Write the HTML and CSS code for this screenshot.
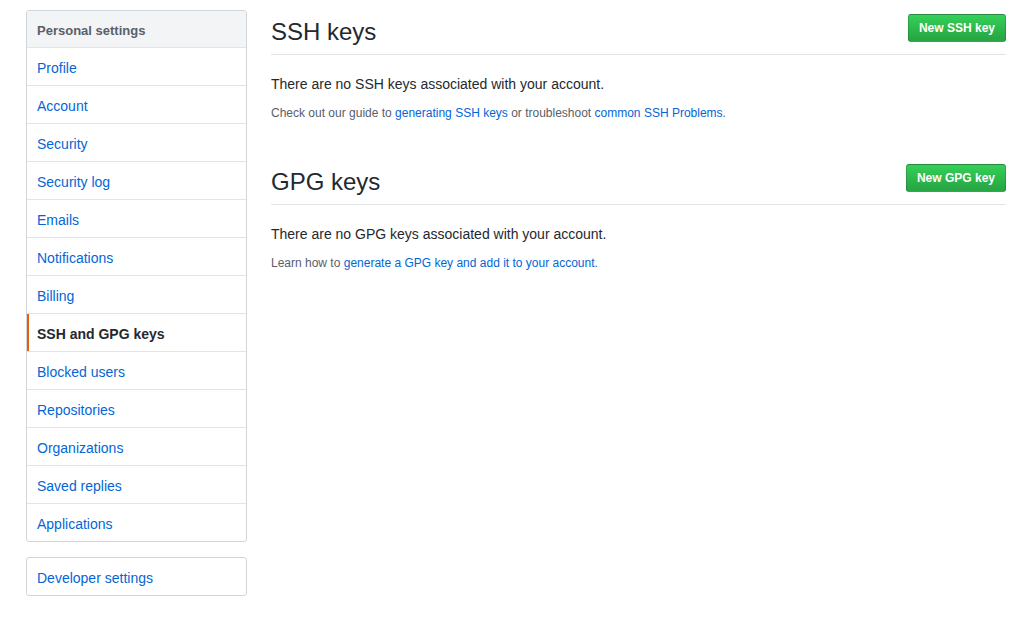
FILE: index.html
```html
<!DOCTYPE html>
<html lang="en">
<head>
<meta charset="utf-8">
<title>SSH and GPG keys</title>
<link rel="stylesheet" href="styles.css">
</head>
<body>
<div class="layout">
  <aside class="sidebar">
    <nav class="menu">
      <div class="menu-heading">Personal settings</div>
      <a class="menu-item" href="#">Profile</a>
      <a class="menu-item" href="#">Account</a>
      <a class="menu-item" href="#">Security</a>
      <a class="menu-item" href="#">Security log</a>
      <a class="menu-item" href="#">Emails</a>
      <a class="menu-item" href="#">Notifications</a>
      <a class="menu-item" href="#">Billing</a>
      <a class="menu-item selected" href="#">SSH and GPG keys</a>
      <a class="menu-item" href="#">Blocked users</a>
      <a class="menu-item" href="#">Repositories</a>
      <a class="menu-item" href="#">Organizations</a>
      <a class="menu-item" href="#">Saved replies</a>
      <a class="menu-item" href="#">Applications</a>
    </nav>
    <nav class="menu">
      <a class="menu-item" href="#">Developer settings</a>
    </nav>
  </aside>
  <main class="main">
    <section class="section">
      <div class="subhead">
        <h2 class="subhead-heading">SSH keys</h2>
        <a class="btn" href="#">New SSH key</a>
      </div>
      <p class="blank">There are no SSH keys associated with your account.</p>
      <p class="note">Check out our guide to <a href="#">generating SSH keys</a> or troubleshoot <a href="#">common SSH Problems</a>.</p>
    </section>
    <section class="section spacious">
      <div class="subhead">
        <h2 class="subhead-heading">GPG keys</h2>
        <a class="btn" href="#">New GPG key</a>
      </div>
      <p class="blank">There are no GPG keys associated with your account.</p>
      <p class="note">Learn how to <a href="#">generate a GPG key and add it to your account</a>.</p>
    </section>
  </main>
</div>
</body>
</html>
```
FILE: styles.css
```css
* { box-sizing: border-box; }
html, body { margin: 0; padding: 0; background: #fff; }
body {
  font-family: "Liberation Sans", Arial, Helvetica, sans-serif;
  font-size: 14px;
  line-height: 1.5;
  color: #24292e;
}
a { color: #0366d6; text-decoration: none; }

.layout {
  display: flex;
  align-items: flex-start;
  gap: 24px;
  padding: 10px 27px 0 26px;
}

.sidebar {
  width: 221px;
  flex: none;
  display: flex;
  flex-direction: column;
  gap: 15px;
}

.menu {
  display: flex;
  flex-direction: column;
  background: #fff;
  border: 1px solid #d1d5da;
  border-radius: 3px;
  overflow: hidden;
}
.menu-heading {
  padding: 10px 10px 6px;
  line-height: 20px;
  font-size: 13px;
  font-weight: bold;
  color: #586069;
  background: #f3f4f6;
  border-bottom: 1px solid #e1e4e8;
}
.menu-item {
  display: block;
  padding: 10px 10px 6px;
  line-height: 21px;
  color: #0366d6;
  border-bottom: 1px solid #e1e4e8;
}
.menu-item:last-child { border-bottom: 0; }
.menu-item.selected {
  color: #24292e;
  font-weight: bold;
  box-shadow: inset 2px 0 0 #e36209;
}

.main {
  flex: 1;
  min-width: 0;
  padding-top: 2px;
}

.spacious { margin-top: 40px; }

.subhead {
  display: flex;
  align-items: flex-start;
  justify-content: space-between;
  padding-bottom: 8px;
  margin-bottom: 19px;
  border-bottom: 1px solid #e1e4e8;
}
.subhead-heading {
  margin: 0;
  padding-top: 6px;
  font-size: 24px;
  font-weight: normal;
  line-height: 28px;
  color: #24292e;
}

.btn {
  display: inline-block;
  margin-top: 2px;
  padding: 3px 10px;
  font-size: 12px;
  font-weight: bold;
  line-height: 20px;
  color: #fff;
  background: linear-gradient(-180deg, #34d058 0%, #28a745 90%);
  border: 1px solid rgba(27, 31, 35, 0.2);
  border-radius: 3px;
  white-space: nowrap;
}

.blank {
  margin: 0 0 9px;
  font-size: 14px;
  line-height: 21px;
}
.note {
  margin: 0;
  font-size: 12px;
  line-height: 18px;
  color: #586069;
}
```
